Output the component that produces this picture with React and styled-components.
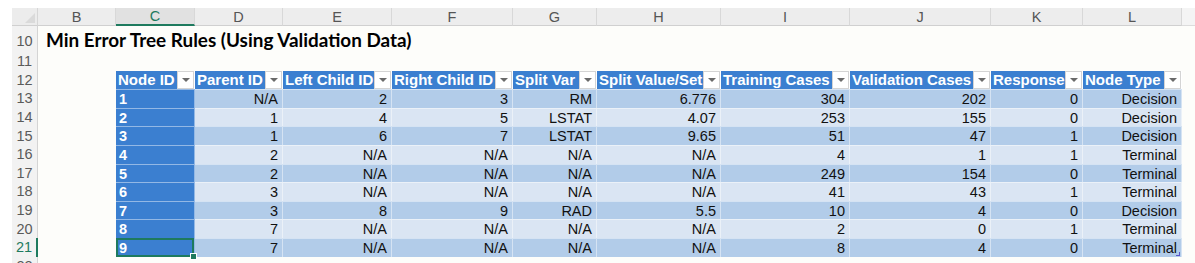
import React from 'react';
import styled, { createGlobalStyle } from 'styled-components';

const GlobalStyle = createGlobalStyle`
    html, body {
        margin: 0;
        padding: 0;
        background: #ffffff;
        overflow: hidden;
    }
    body {
        width: 1195px;
        height: 263px;
    }
`;

const COLS = ['B', 'C', 'D', 'E', 'F', 'G', 'H', 'I', 'J', 'K', 'L'];
const WIDTHS = '26px 78px 79px 88px 109px 121px 84px 124px 129px 141px 92px 99px 13px';

const HEADERS = [
    'Node ID', 'Parent ID', 'Left Child ID', 'Right Child ID', 'Split Var',
    'Split Value/Set', 'Training Cases', 'Validation Cases', 'Response', 'Node Type',
];

const ROWS = [
    [1, 'N/A', 2, 3, 'RM', '6.776', 304, 202, 0, 'Decision'],
    [2, 1, 4, 5, 'LSTAT', '4.07', 253, 155, 0, 'Decision'],
    [3, 1, 6, 7, 'LSTAT', '9.65', 51, 47, 1, 'Decision'],
    [4, 2, 'N/A', 'N/A', 'N/A', 'N/A', 4, 1, 1, 'Terminal'],
    [5, 2, 'N/A', 'N/A', 'N/A', 'N/A', 249, 154, 0, 'Terminal'],
    [6, 3, 'N/A', 'N/A', 'N/A', 'N/A', 41, 43, 1, 'Terminal'],
    [7, 3, 8, 9, 'RAD', '5.5', 10, 4, 0, 'Decision'],
    [8, 7, 'N/A', 'N/A', 'N/A', 'N/A', 2, 0, 1, 'Terminal'],
    [9, 7, 'N/A', 'N/A', 'N/A', 'N/A', 8, 4, 0, 'Terminal'],
];

const Page = styled.div`
    padding-top: 8px;
    padding-left: 12px;
    height: 255px;
    overflow: hidden;
`;

// 列見出し 18px、タイトル行は少し高め、残りは 18.6px
const Sheet = styled.div`
    display: grid;
    grid-template-columns: ${WIDTHS};
    grid-template-rows: 18px 26px;
    grid-auto-rows: 18.6px;
    background: #fdfdfa;
    font-family: "Liberation Sans", Arial, sans-serif;
`;

const Corner = styled.div`
    box-sizing: border-box;
    background: #ececec;
    border-right: 1px solid #d6d6d6;
    border-bottom: 1px solid #d0d0d0;
    position: relative;

    &::after {
        content: '';
        position: absolute;
        right: 2px;
        bottom: 2px;
        border-style: solid;
        border-width: 0 0 10px 10px;
        border-color: transparent transparent #dadada transparent;
    }
`;

const ColLetter = styled.div`
    box-sizing: border-box;
    background: ${({ $active }) => ($active ? '#e1e1e1' : '#ededed')};
    border-right: 1px solid #d8d8d8;
    border-bottom: ${({ $active }) => ($active ? '2px solid #1e7a5e' : '1px solid #d0d0d0')};
    color: ${({ $active }) => ($active ? '#1e7a5e' : '#555555')};
    font-size: 14.5px;
    display: flex;
    align-items: center;
    justify-content: center;
`;

const ColFiller = styled.div`
    box-sizing: border-box;
    background: #f4f4f4;
    border-bottom: 1px solid #dcdcdc;
`;

const RowNum = styled.div`
    background: #f2f2f2;
    box-sizing: border-box;
    border-right: ${({ $active }) => ($active ? '2px solid #1e7a5e' : '1px solid #d4d4d4')};
    color: ${({ $active }) => ($active ? '#1e7a5e' : '#5a5a5a')};
    font-size: 14.5px;
    display: flex;
    align-items: ${({ $tall }) => ($tall ? 'flex-end' : 'center')};
    padding-bottom: ${({ $tall }) => ($tall ? '3px' : '0')};
    justify-content: center;
`;

const Blank = styled.div`
    grid-column: span ${({ $span }) => $span || 1};
`;

const Title = styled.div`
    grid-column: span 11;
    display: flex;
    align-items: flex-end;
    padding: 0 0 1px 8px;
    font-family: Lato, "Liberation Sans", sans-serif;
    font-weight: 700;
    font-size: 18.9px;
    color: #000;
    white-space: nowrap;
`;

const HeadCell = styled.div`
    display: flex;
    min-width: 0;
    box-sizing: border-box;
    border-right: 1px solid #ffffff;
`;

const HeadLabel = styled.div`
    flex: 1;
    min-width: 0;
    overflow: hidden;
    white-space: nowrap;
    background: #3b7fd0;
    color: #ffffff;
    font-weight: 700;
    font-size: 15px;
    line-height: 18.6px;
    padding-left: 2px;
`;

const DropBtn = styled.div`
    width: 17px;
    flex: none;
    box-sizing: border-box;
    background: #ffffff;
    border: 1px solid #d4d4d4;
    display: flex;
    align-items: center;
    justify-content: center;

    &::before {
        content: '';
        border-style: solid;
        border-width: 4px 4px 0 4px;
        border-color: #6a6a6a transparent transparent transparent;
    }
`;

const Cell = styled.div`
    position: relative;
    box-sizing: border-box;
    background: ${({ $first, $band }) => ($first ? '#3b7fd0' : $band ? '#b2cce9' : '#dae5f3')};
    color: ${({ $first }) => ($first ? '#ffffff' : '#111111')};
    font-weight: ${({ $first }) => ($first ? 700 : 400)};
    font-size: 14.5px;
    line-height: 18px;
    text-align: ${({ $first }) => ($first ? 'left' : 'right')};
    padding: 0 4px 0 3px;
    white-space: nowrap;
    border-right: 1px solid rgba(255, 255, 255, 0.45);
    border-top: 1px solid rgba(255, 255, 255, 0.45);

    ${({ $selected }) => $selected && `
        &::after {
            content: '';
            position: absolute;
            inset: -1px 0 0 0;
            border: 2px solid #1e7a5e;
        }
        &::before {
            content: '';
            position: absolute;
            right: -3px;
            bottom: -3px;
            width: 5px;
            height: 5px;
            background: #1e7a5e;
            border: 1px solid #ffffff;
            z-index: 2;
        }
    `}

    ${({ $corner }) => $corner && `
        &::after {
            content: '';
            position: absolute;
            right: 1px;
            bottom: 1px;
            width: 3px;
            height: 3px;
            border-right: 1px solid #5a55c8;
            border-bottom: 1px solid #5a55c8;
        }
    `}
`;

export default function App() {
    return (
        <>
            <GlobalStyle />
            <Page>
                <Sheet>
                    <Corner />
                    {COLS.map((c) => (
                        <ColLetter key={c} $active={c === 'C'}>{c}</ColLetter>
                    ))}
                    <ColFiller />

                    <RowNum $tall>10</RowNum>
                    <Title>Min Error Tree Rules (Using Validation Data)</Title>
                    <Blank />

                    <RowNum>11</RowNum>
                    <Blank $span={12} />

                    <RowNum>12</RowNum>
                    <Blank />
                    {HEADERS.map((h) => (
                        <HeadCell key={h}>
                            <HeadLabel>{h}</HeadLabel>
                            <DropBtn />
                        </HeadCell>
                    ))}
                    <Blank />

                    {ROWS.map((r, i) => (
                        <React.Fragment key={i}>
                            <RowNum $active={i === 8}>{13 + i}</RowNum>
                            <Blank />
                            {r.map((v, j) => (
                                <Cell
                                    key={j}
                                    $first={j === 0}
                                    $band={i % 2 === 0}
                                    $selected={i === 8 && j === 0}
                                    $corner={i === 8 && j === 9}
                                >
                                    {v}
                                </Cell>
                            ))}
                            <Blank />
                        </React.Fragment>
                    ))}

                    <RowNum>22</RowNum>
                </Sheet>
            </Page>
        </>
    );
}
